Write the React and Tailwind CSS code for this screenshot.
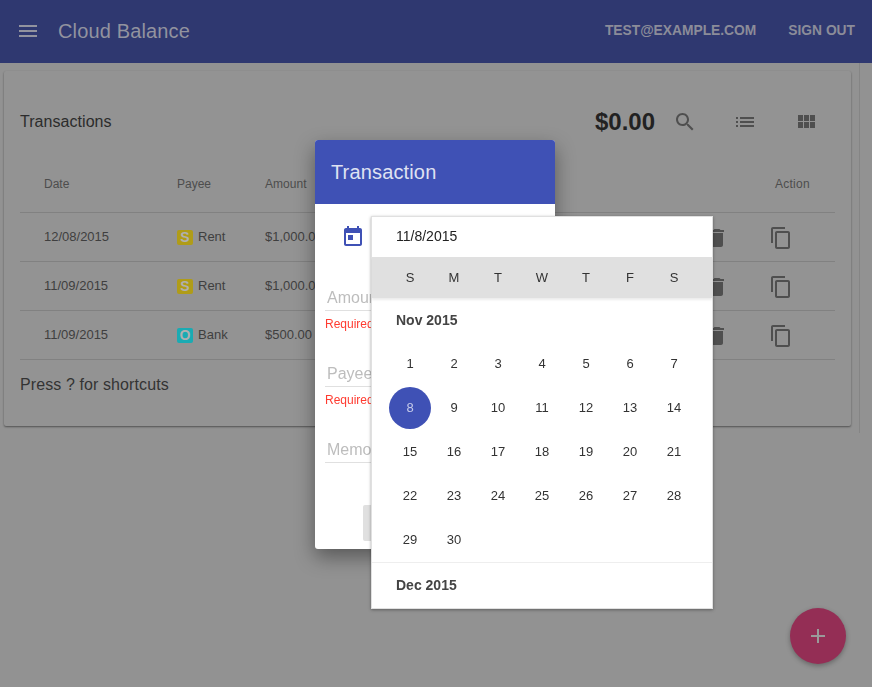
import React from 'react';

const Icon = ({ d, className }) => (
  <svg viewBox="0 0 24 24" fill="currentColor" className={className}>
    <path d={d} />
  </svg>
);

const MENU = 'M3 18h18v-2H3v2zm0-5h18v-2H3v2zm0-7v2h18V6H3z';
const SEARCH =
  'M15.5 14h-.79l-.28-.27C15.41 12.59 16 11.11 16 9.5 16 5.91 13.09 3 9.5 3S3 5.91 3 9.5 5.91 16 9.5 16c1.61 0 3.09-.59 4.23-1.57l.27.28v.79l5 4.99L20.49 19l-4.99-5zm-6 0C7.01 14 5 11.99 5 9.5S7.01 5 9.5 5 14 7.01 14 9.5 11.99 14 9.5 14z';
const LIST = 'M3 13h2v-2H3v2zm0 4h2v-2H3v2zm0-8h2V7H3v2zm4 4h14v-2H7v2zm0 4h14v-2H7v2zM7 7v2h14V7H7z';
const MODULE = 'M4 11h5V5H4v6zm0 7h5v-6H4v6zm6 0h5v-6h-5v6zm6 0h5v-6h-5v6zm-6-7h5V5h-5v6zm6-6v6h5V5h-5z';
const TRASH = 'M6 19c0 1.1.9 2 2 2h8c1.1 0 2-.9 2-2V7H6v12zM19 4h-3.5l-1-1h-5l-1 1H5v2h14V4z';
const COPY =
  'M16 1H4c-1.1 0-2 .9-2 2v14h2V3h12V1zm3 4H8c-1.1 0-2 .9-2 2v14c0 1.1.9 2 2 2h11c1.1 0 2-.9 2-2V7c0-1.1-.9-2-2-2zm0 16H8V7h11v14z';
const TODAY =
  'M19 3h-1V1h-2v2H8V1H6v2H5c-1.11 0-1.99.9-1.99 2L3 19c0 1.1.89 2 2 2h14c1.1 0 2-.9 2-2V5c0-1.1-.9-2-2-2zm0 16H5V8h14v11zM7 10h5v5H7z';
const ADD = 'M19 13h-6v6h-2v-6H5v-2h6V5h2v6h6v2z';

const rows = [
  { date: '12/08/2015', letter: 'S', badge: 'bg-[#b09c18]', payee: 'Rent', amount: '$1,000.00' },
  { date: '11/09/2015', letter: 'S', badge: 'bg-[#b09c18]', payee: 'Rent', amount: '$1,000.00' },
  { date: '11/09/2015', letter: 'O', badge: 'bg-[#1aabb3]', payee: 'Bank', amount: '$500.00' },
];

const weekDays = ['S', 'M', 'T', 'W', 'T', 'F', 'S'];
const days = Array.from({ length: 30 }, (_, i) => i + 1);

const Field = ({ label, error, last }) => (
  <div className={last ? 'h-[67px]' : 'h-[76px]'}>
    <div className="h-[25px] flex items-center pl-0.5 border-b border-[#e0e0e0] text-base text-[#bdbdbd]">
      {label}
    </div>
    {error && <div className="h-[25px] flex items-center text-xs text-[#ff3b30]">{error}</div>}
  </div>
);

const DatePicker = () => (
  <div className="fixed left-[371px] top-[216px] w-[342px] h-[393px] bg-white border border-[#e0e0e0] shadow-[0_1px_3px_rgba(0,0,0,0.35)] text-[13px] text-[#333]">
    <div className="h-10 flex items-center pl-6 pb-0.5 text-sm text-[#222]">11/8/2015</div>
    <div className="h-[41px] grid grid-cols-[repeat(7,44px)] pl-4 items-center bg-[#e0e0e0] shadow-[0_2px_2px_rgba(0,0,0,0.08)] text-[13px] text-[#333]">
      {weekDays.map((d, i) => (
        <div key={i} className="text-center">{d}</div>
      ))}
    </div>
    <div className="h-11 flex items-center pl-6 text-sm font-bold text-[#444]">Nov 2015</div>
    <div className="grid grid-cols-[repeat(7,44px)] auto-rows-[44px] pl-4">
      {days.map((d) =>
        d === 8 ? (
          <div key={d} className="m-px flex items-center justify-center rounded-full bg-[#3f51b5] text-[#c5cae9]">
            {d}
          </div>
        ) : (
          <div key={d} className="flex items-center justify-center">
            {d}
          </div>
        )
      )}
    </div>
    <div className="border-t border-[#eeeeee] h-[46px] flex items-center pl-6 pb-0.5 text-sm font-bold text-[#444]">
      Dec 2015
    </div>
  </div>
);

const TransactionDialog = () => (
  <div className="fixed left-[315px] top-[140px] w-[240px] h-[409px] bg-white rounded-[3px] shadow-[0_8px_20px_rgba(0,0,0,0.4)] flex flex-col">
    <div className="h-16 shrink-0 flex items-center pl-4 bg-[#3f51b5] rounded-t-[3px] text-xl tracking-[0.15px] text-[#dfe2f2]">
      Transaction
    </div>
    <div className="h-[82px] shrink-0 pt-[21px] pl-[26px]">
      <Icon d={TODAY} className="w-6 h-6 text-[#3f51b5]" />
    </div>
    <div className="px-2.5">
      <Field label="Amount" error="Required" />
      <Field label="Payee" error="Required" />
      <Field label="Memo" last />
    </div>
    <div className="pl-12">
      <button className="w-[88px] h-9 rounded-[2px] bg-[#e0e0e0] text-sm text-[#333]">CANCEL</button>
    </div>
  </div>
);

const App = () => (
  <div
    className="relative h-screen overflow-hidden bg-[#929292]"
    style={{ fontFamily: '"Liberation Sans", Arial, sans-serif' }}
  >
    <header className="h-[63px] flex items-center justify-between pl-4 pr-[17px] pb-0.5 bg-[#2f3870] text-[#92939f]">
      <div className="flex items-center">
        <Icon d={MENU} className="w-6 h-6" />
        <span className="ml-[18px] text-xl tracking-[0.15px]">Cloud Balance</span>
      </div>
      <div className="flex items-center gap-8 pt-0.5 text-[13.8px] font-bold text-[#8b8c99]">
        <span>TEST@EXAMPLE.COM</span>
        <span>SIGN OUT</span>
      </div>
    </header>

    <main className="w-[860px] pl-1 pr-2 pt-2 pb-[7px] border-r border-[#858585]">
      <section className="h-[355px] rounded-[2px] bg-[#939393] shadow-[0_1px_2px_rgba(0,0,0,0.45)] px-4">
        <div className="h-[74px] pt-[28px] flex items-center">
          <h2 className="flex-1 text-base tracking-[0.05px] text-[#2c2c2c]">Transactions</h2>
          <span className="text-2xl font-bold text-[#222222] mr-[18px]">$0.00</span>
          <Icon d={SEARCH} className="w-6 h-6 text-[#4f4f4f]" />
          <Icon d={LIST} className="w-6 h-6 ml-[36px] text-[#4f4f4f]" />
          <Icon d={MODULE} className="w-6 h-6 ml-[37px] mr-[17px] text-[#4f4f4f]" />
        </div>

        <div className="h-[68px] pt-[10px] flex items-center pl-6 border-b border-[#818181] text-xs text-[#4d4d4d]">
          <div className="w-[133px]">Date</div>
          <div className="w-[88px]">Payee</div>
          <div className="flex-1 tracking-[0.05px]">Amount</div>
          <div className="w-[60px] tracking-[0.25px]">Action</div>
        </div>

        {rows.map((row, i) => (
          <div key={i} className="h-[49px] flex items-center pl-6 border-b border-[#818181] text-[13px] text-[#3f3f3f]">
            <div className="w-[133px]">{row.date}</div>
            <div className="w-[88px] flex items-center">
              <span className={`w-4 h-[15px] rounded-[2px] flex items-center justify-center text-sm font-bold text-[#b0b0b0] ${row.badge}`}>
                {row.letter}
              </span>
              <span className="ml-[5px]">{row.payee}</span>
            </div>
            <div className="flex-1">{row.amount}</div>
            <Icon d={TRASH} className="w-6 h-6 mt-0.5 text-[#4f4f4f]" />
            <Icon d={COPY} className="w-6 h-6 mt-0.5 ml-[40px] mr-[42px] text-[#4f4f4f]" />
          </div>
        ))}

        <div className="pt-[13px] text-base tracking-[0.1px] text-[#333333]">Press ? for shortcuts</div>
      </section>
    </main>

    <TransactionDialog />
    <DatePicker />

    <button className="fixed left-[790px] top-[608px] w-14 h-14 rounded-full flex items-center justify-center bg-[#942e55] text-[#9a9a9a] shadow-[0_2px_5px_rgba(0,0,0,0.3)]">
      <Icon d={ADD} className="w-6 h-6" />
    </button>
  </div>
);

export default App;
